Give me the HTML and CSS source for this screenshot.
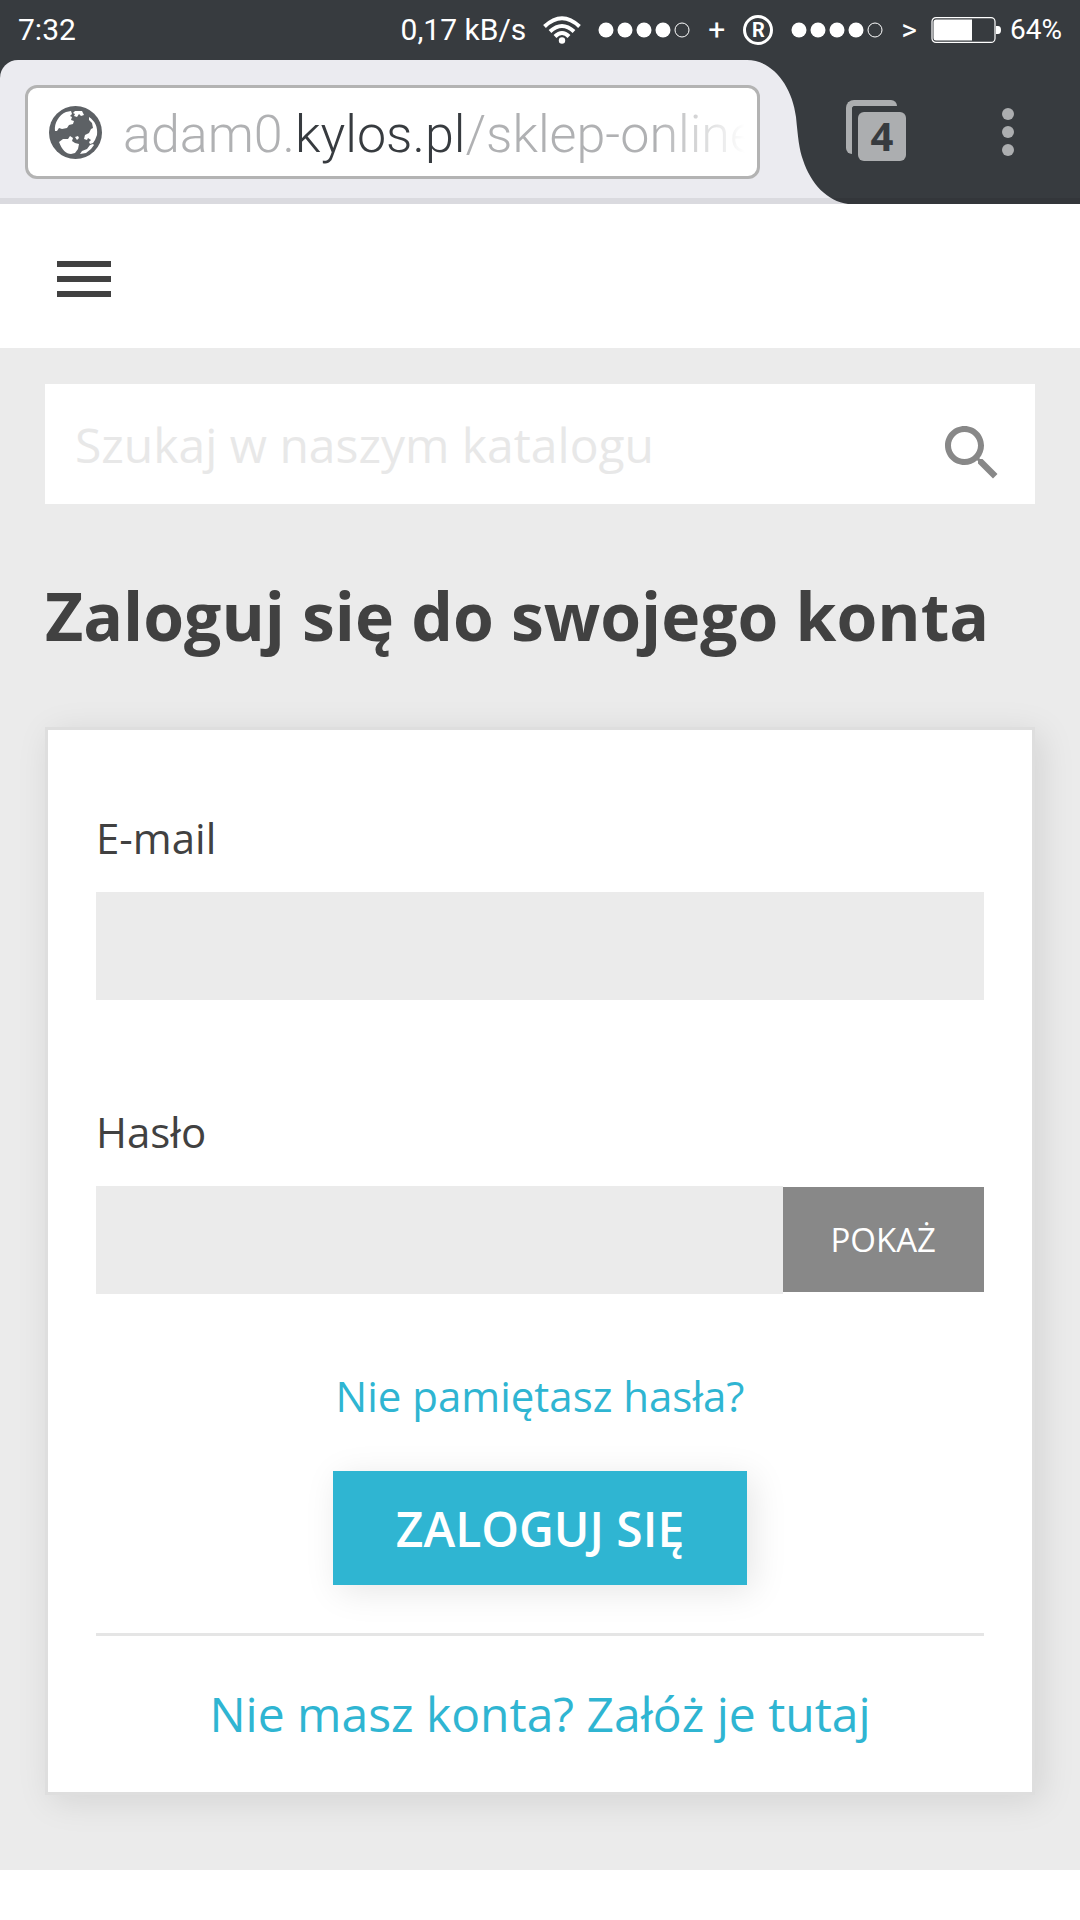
FILE: index.html
```html
<!DOCTYPE html>
<html lang="pl">
<head>
    <meta charset="UTF-8">
    <meta name="viewport" content="width=device-width, initial-scale=1.0">
    <title>Zaloguj się</title>
    <link rel="stylesheet" href="styles.css">
</head>
<body>
    <!-- Phone status bar -->
    <div class="status-bar">
        <span>7:32</span>
        <div class="status-icons">
            <div class="network">
                <span>0,17 kB/s</span>
                <svg width="38" height="28" viewBox="0 0 38 28" fill="none" stroke="#fff" stroke-width="4">
                    <path d="M1.5 10.500Q19 -6 36.500 10.500"/>
                    <path d="M7 15.500Q19 4.500 31 15.500"/>
                    <path d="M12 20.500Q19 13.500 26 20.500"/>
                    <circle cx="19" cy="24.500" r="3.200" fill="#fff" stroke="none"/>
                </svg>
                <svg width="92" height="16" viewBox="0 0 92 16" fill="#fff">
                    <circle cx="8" cy="8" r="7.500"/>
                    <circle cx="27" cy="8" r="7.500"/>
                    <circle cx="46" cy="8" r="7.500"/>
                    <circle cx="65" cy="8" r="7.500"/>
                    <circle cx="84" cy="8" r="7" fill="none" stroke="#fff"/>
                </svg>
            </div>
            <span>+</span>
            <span class="roaming">R</span>
            <svg width="92" height="16" viewBox="0 0 92 16" fill="#fff">
                <circle cx="8" cy="8" r="7.500"/>
                <circle cx="27" cy="8" r="7.500"/>
                <circle cx="46" cy="8" r="7.500"/>
                <circle cx="65" cy="8" r="7.500"/>
                <circle cx="84" cy="8" r="7" fill="none" stroke="#fff"/>
            </svg>
            <span>&gt;</span>
        </div>
        <div class="battery">
            <svg width="70" height="26" viewBox="0 0 70 26">
                <rect x="1" y="0.600" width="63" height="24.800" rx="4" fill="none" stroke="#fff" stroke-width="1.200"/>
                <path d="M5 2.500h36v21H5q-2.500 0-2.500-2.500V5q0-2.500 2.500-2.500z" fill="#fff"/>
                <path d="M65 9h2q3 0 3 4t-3 4h-2z" fill="#fff"/>
            </svg>
            <span>64%</span>
        </div>
    </div>

    <!-- Browser toolbar -->
    <div class="toolbar">
        <div class="tab">
            <svg class="tab-edge" width="101" height="144" viewBox="0 0 101 144" fill="#ebebf0">
                <path d="M0 0C25 0 45 25 49 57C51 77 52 89 56 100C64 124 80 141 101 144H0z"/>
            </svg>
            <div class="address-bar">
                <svg width="53" height="53" viewBox="0 0 53 53">
                    <circle cx="26.500" cy="26.500" r="26.500" fill="#5d6165"/>
                    <path fill="#fff" d="M6 25C5 17 10 9 17 6l5-1 1 3-2 2 2 1-1 3 3 1-1 3-4 1-2 3-5 1-3-1-2 3zM26 5l7 0 2 4-3 1-2-2-2 3-3-1 1-2-2-1zM40 11c6 4 9 10 8 18l-2 5-2 3-3 1-1-2 2-2-3-2-1 2-3-1 1-4 4-2 2-4 2-1-1-5-3-3zM10 36l4-3 5 0 2-3 3 2-1 3 3 2 4 1-1 5-3 4-4 1c-5 0-9-4-12-12zM44 38l1 1-3 4-5 4-6 1 2-3 5-2 3-4zM26 31l3-1 1 2-2 2z"/>
                </svg>
                <div class="url" role="textbox" aria-label="Adres strony">adam0.<span>kylos.pl</span>/sklep-online</div>
            </div>
        </div>
        <div class="browser-actions">
            <button class="tabs-button" type="button" aria-label="Otwarte karty">
                <span class="tabs-count">4</span>
            </button>
            <button class="more-button" type="button" aria-label="Więcej opcji">
                <svg width="12" height="48" viewBox="0 0 12 48" fill="#acaeb0">
                    <circle cx="6" cy="6" r="6"/>
                    <circle cx="6" cy="24" r="6"/>
                    <circle cx="6" cy="42" r="6"/>
                </svg>
            </button>
        </div>
    </div>

    <header class="site-header">
        <button type="button" aria-label="Menu">
            <svg width="72" height="72" viewBox="0 0 24 24" fill="#414141">
                <path d="M3 18h18v-2H3v2zm0-5h18v-2H3v2zm0-7v2h18V6H3z"/>
            </svg>
        </button>
    </header>

    <main class="content">
        <form class="search">
            <input type="text" placeholder="Szukaj w naszym katalogu" aria-label="Szukaj">
            <button type="submit" aria-label="Szukaj">
                <svg width="72" height="72" viewBox="0 0 24 24" fill="#888">
                    <path d="M15.500 14h-.79l-.28-.27C15.410 12.590 16 11.110 16 9.500 16 5.910 13.090 3 9.500 3S3 5.910 3 9.500 5.910 16 9.500 16c1.610 0 3.090-.59 4.230-1.570l.27.28v.79l5 4.990L20.490 19l-4.990-5zm-6 0C7.010 14 5 11.990 5 9.500S7.010 5 9.500 5 14 7.010 14 9.500 11.990 14 9.500 14z"/>
                </svg>
            </button>
        </form>

        <h1>Zaloguj się do swojego konta</h1>

        <section class="card">
            <form class="login-form">
                <div class="form-group">
                    <label for="email">E-mail</label>
                    <input type="email" id="email">
                </div>
                <div class="form-group">
                    <label for="password">Hasło</label>
                    <div class="input-group">
                        <input type="password" id="password">
                        <button class="show-button" id="showPassword" type="button">POKAŻ</button>
                    </div>
                </div>
                <a class="forgot-link" href="#">Nie pamiętasz hasła?</a>
                <button class="login-button" type="submit">ZALOGUJ SIĘ</button>
            </form>
            <div class="no-account">
                <a href="#">Nie masz konta? Załóż je tutaj</a>
            </div>
        </section>
    </main>

    <script>
        const passwordInput = document.getElementById('password');
        const showButton = document.getElementById('showPassword');

        // Toggle password visibility
        showButton.addEventListener('click', function() {
            const hidden = passwordInput.type === 'password';
            passwordInput.type = hidden ? 'text' : 'password';
            showButton.textContent = hidden ? 'UKRYJ' : 'POKAŻ';
        });
    </script>
</body>
</html>
```
FILE: styles.css
```css
* {
    box-sizing: border-box;
}

body {
    margin: 0;
    background-color: #fff;
    color: #414141;
    font-family: "Open Sans", "Noto Sans", sans-serif;
    font-size: 42px;
    line-height: 63px;
}

svg {
    display: block;
    flex-shrink: 0;
}

button {
    background: none;
    border: none;
    padding: 0;
    font-family: inherit;
    cursor: pointer;
}

input {
    border: none;
    border-radius: 0;
    color: inherit;
    font-family: inherit;
}

a {
    color: #2fb5d2;
    text-decoration: none;
}

/* Status bar */
.status-bar {
    display: flex;
    align-items: center;
    height: 60px;
    padding: 0 18px;
    background-color: #373b3f;
    color: #fff;
    font-family: Roboto, sans-serif;
    font-size: 30px;
    line-height: 36px;
}

.status-icons {
    display: flex;
    align-items: center;
    gap: 18px;
    margin-left: auto;
}

.network {
    display: flex;
    align-items: center;
    gap: 17px;
}

.roaming {
    width: 30px;
    height: 30px;
    border: 3px solid #fff;
    border-radius: 50%;
    font-size: 20px;
    font-weight: 700;
    line-height: 24px;
    text-align: center;
}

.battery {
    display: flex;
    align-items: center;
    gap: 9px;
    margin-left: 14px;
    font-size: 28px;
}

/* Browser toolbar */
.toolbar {
    position: relative;
    display: flex;
    height: 144px;
    background-color: #373b3f;
}

.toolbar::after {
    content: "";
    position: absolute;
    left: 0;
    right: 0;
    bottom: 0;
    height: 6px;
    background-color: rgba(0, 0, 0, 0.07);
}

.tab {
    position: relative;
    flex: 1;
    min-width: 0;
    margin-right: 99px;
    padding-top: 25px;
    padding-left: 25px;
    background-color: #ebebf0;
    border-top-left-radius: 18px;
}

.tab-edge {
    position: absolute;
    top: 0;
    left: 100%;
}

.address-bar {
    position: relative;
    display: flex;
    align-items: center;
    gap: 21px;
    height: 94px;
    margin-right: -13px;
    padding: 0 12px 0 21px;
    background-color: #fff;
    border: 3px solid #b3b3b3;
    border-radius: 12px;
}

.url {
    flex: 1;
    padding-top: 4px;
    overflow: hidden;
    color: #b0b1b3;
    font-family: Roboto, sans-serif;
    font-size: 52px;
    font-weight: 300;
    white-space: nowrap;
    -webkit-mask-image: linear-gradient(to left, transparent, #000 90px);
    mask-image: linear-gradient(to left, transparent, #000 90px);
}

.url span {
    color: #373b3f;
}

.browser-actions {
    display: flex;
    align-items: center;
    justify-content: space-between;
    width: 234px;
    padding-right: 66px;
}

.tabs-button {
    position: relative;
    width: 60px;
    height: 64px;
    padding: 12px 0 3px 12px;
}

.tabs-button::before {
    content: "";
    position: absolute;
    top: 0;
    left: 0;
    width: 45px;
    height: 48px;
    border-top: 6px solid #acaeb0;
    border-left: 6px solid #acaeb0;
    border-radius: 8px 6px 0 6px;
}

.tabs-count {
    position: relative;
    display: block;
    height: 49px;
    background-color: #acaeb0;
    border-radius: 6px;
    color: #373b3f;
    font-size: 40px;
    font-weight: 700;
    line-height: 48px;
}

/* Shop header */
.site-header {
    display: flex;
    align-items: center;
    height: 144px;
    padding: 0 48px;
}

.site-header button {
    padding-top: 6px;
}

/* Content */
.content {
    padding: 36px 45px 75px;
    background-color: #ebebeb;
}

.search {
    display: flex;
    align-items: center;
    height: 120px;
    padding: 0 27px 0 30px;
    background-color: #fff;
}

.search input {
    flex: 1;
    min-width: 0;
    padding: 2px 0 0;
    background: none;
    font-size: 48px;
    line-height: 72px;
}

.search input::placeholder {
    color: #e8e8e8;
    opacity: 1;
}

.search button {
    padding-top: 18px;
}

h1 {
    margin: 75px 0 76px;
    font-size: 66px;
    font-weight: 700;
    line-height: 72px;
}

.card {
    padding: 76px 48px 42px;
    background-color: #fff;
    border: 3px solid #dedede;
    box-shadow: 6px 6px 33px rgba(0, 0, 0, 0.1);
}

.login-form {
    display: flex;
    flex-direction: column;
    align-items: center;
    padding-bottom: 48px;
}

.form-group {
    display: flex;
    flex-direction: column;
    gap: 23px;
    width: 100%;
}

.form-group + .form-group {
    margin-top: 100px;
}

.form-group input {
    height: 108px;
    padding: 0 24px;
    background-color: #ebebeb;
    font-size: 42px;
}

.input-group {
    display: flex;
}

.input-group input {
    flex: 1;
    min-width: 0;
}

.show-button {
    height: 105px;
    margin-top: 1px;
    padding: 0 48px;
    background-color: #888;
    color: #fff;
    font-size: 33px;
}

.forgot-link {
    margin: 70px 0 44px;
}

.login-button {
    height: 114px;
    padding: 0 63px;
    background-color: #2fb5d2;
    box-shadow: 6px 6px 33px rgba(0, 0, 0, 0.1);
    color: #fff;
    font-size: 48px;
    font-weight: 600;
}

.no-account {
    padding-top: 42px;
    border-top: 3px solid #e5e5e5;
    font-size: 48px;
    line-height: 72px;
    text-align: center;
}
```
